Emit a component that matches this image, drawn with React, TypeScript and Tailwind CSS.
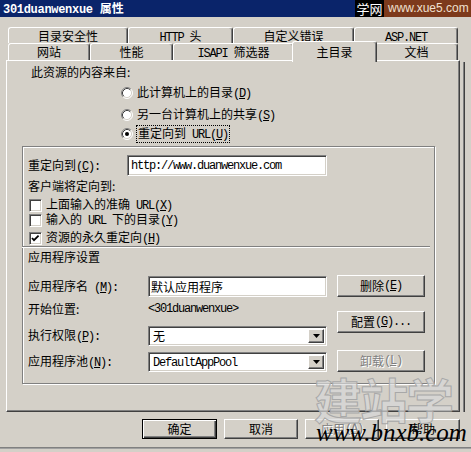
import React from 'react';

const M = ({ children }: { children: React.ReactNode }) => (
  <span className="font-['Liberation_Mono'] tracking-[-1.2px] whitespace-pre">{children}</span>
);

const U = ({ children }: { children: React.ReactNode }) => <span className="underline">{children}</span>;

const sunken =
  'bg-white border border-t-[#808080] border-l-[#808080] border-b-white border-r-white shadow-[inset_1px_1px_0_#404040,inset_-1px_-1px_0_#d4d0c8]';
const raised =
  'bg-[#d4d0c8] border border-t-white border-l-white border-b-[#404040] border-r-[#404040] shadow-[inset_-1px_-1px_0_#808080]';
const disabled = 'text-[#808080] [text-shadow:1px_1px_0_#ffffff]';

function Radio({ checked }: { checked?: boolean }) {
  return (
    <svg width="12" height="12" viewBox="0 0 12 12" className="shrink-0">
      <circle cx="6" cy="6" r="5" fill="white" />
      <path d="M2.11 9.89 A5.5 5.5 0 0 1 9.89 2.11" fill="none" stroke="#808080" />
      <path d="M9.89 2.11 A5.5 5.5 0 0 1 2.11 9.89" fill="none" stroke="#ffffff" />
      <path d="M2.82 9.18 A4.5 4.5 0 0 1 9.18 2.82" fill="none" stroke="#404040" />
      <path d="M9.18 2.82 A4.5 4.5 0 0 1 2.82 9.18" fill="none" stroke="#d4d0c8" />
      {checked && <circle cx="6" cy="6" r="2" fill="black" />}
    </svg>
  );
}

function Check({ checked }: { checked?: boolean }) {
  return (
    <div className={`w-[13px] h-[13px] shrink-0 ${sunken}`}>
      {checked && (
        <svg width="11" height="11" viewBox="0 0 11 11">
          <path d="M2 5 L4 7.2 L8.6 2.6" fill="none" stroke="black" strokeWidth="1.8" />
        </svg>
      )}
    </div>
  );
}

function Select({ value }: { value: React.ReactNode }) {
  return (
    <div className={`w-[179px] h-[20px] flex items-center p-[2px] ${sunken}`}>
      <span className="flex-1 pl-[2px] leading-[14px]">{value}</span>
      <div className={`w-[16px] h-full flex items-center justify-center ${raised}`}>
        <svg width="7" height="4" viewBox="0 0 7 4">
          <path d="M0 0 H7 L3.5 4 Z" fill="black" />
        </svg>
      </div>
    </div>
  );
}

function Tab({ w, children, selected }: { w: string; children: React.ReactNode; selected?: boolean }) {
  return (
    <div
      className={`${w} shrink-0 border-t border-l border-r border-t-white border-l-white border-r-[#404040] rounded-t-[3px] shadow-[inset_-1px_0_0_#808080] bg-[#d4d0c8] text-center leading-[14px] whitespace-nowrap ${
        selected ? 'relative z-10 -mt-[2px] h-[21px] -mx-[2px] pt-[3px]' : 'h-full pt-[1px]'
      }`}
    >
      {children}
    </div>
  );
}

export default function App() {
  return (
    <div className="w-[471px] h-[452px] bg-[#d4d0c8] relative overflow-hidden text-[12px] text-black font-['Noto_Sans_CJK_SC',sans-serif]">
      {/* Title bar */}
      <div className="h-[17px] bg-[#0a246a] flex items-center">
        <span className="flex-1 pl-[3px] text-white font-bold leading-[14px] whitespace-nowrap">
          <span className="font-['Liberation_Mono'] tracking-[-0.3px]">301duanwenxue </span>属性
        </span>
        <div className="w-[29px] h-full bg-black text-white text-[13px] text-center leading-[17px] whitespace-nowrap">学网</div>
        <div className="w-[87px] h-full bg-[#7d3a1c] text-[#f0e0d0] text-[12px] font-['Liberation_Sans'] pl-[4px] leading-[17px] whitespace-nowrap">
          www.xue5.com
        </div>
      </div>

      {/* Tabs */}
      <div className="mt-[10px] pl-[8px]">
        <div className="h-[16px] flex">
          <Tab w="w-[120px]">目录安全性</Tab>
          <Tab w="w-[105px]">
            <M>HTTP </M>头
          </Tab>
          <Tab w="w-[121px]">自定义错误</Tab>
          <Tab w="w-[104px]">
            <M>ASP.NET</M>
          </Tab>
        </div>
        <div className="h-[17px] flex">
          <Tab w="w-[82px]">网站</Tab>
          <Tab w="w-[83px]">性能</Tab>
          <Tab w="w-[121px]">
            <M>ISAPI </M>筛选器
          </Tab>
          <Tab w="w-[85px]" selected>
            主目录
          </Tab>
          <Tab w="w-[83px]">文档</Tab>
        </div>
      </div>

      {/* Panel */}
      <div className="flex">
        <div className="ml-[6px] w-[454px] h-[352px] border border-t-white border-l-white border-r-[#404040] border-b-[#404040] shadow-[inset_-1px_-1px_0_#808080] flex flex-col">
          <div className="mt-[4px] ml-[24px] leading-[14px]">此资源的内容来自:</div>
          <div className="mt-[6px] ml-[114px] flex items-center gap-[4px] leading-[14px]">
            <Radio />
            <span>
              此计算机上的目录<M>(<U>D</U>)</M>
            </span>
          </div>
          <div className="mt-[6px] ml-[114px] flex items-center gap-[4px] leading-[14px]">
            <Radio />
            <span>
              另一台计算机上的共享<M>(<U>S</U>)</M>
            </span>
          </div>
          <div className="mt-[3px] ml-[114px] flex items-center gap-[3px] h-[16px]">
            <Radio checked />
            <span className="border border-dotted border-black leading-[14px] px-[1px]">
              重定向到<M> URL(<U>U</U>)</M>
            </span>
          </div>

          {/* Group box */}
          <div className="mt-[4px] ml-[15px] w-[413px] h-[238px] border border-[#808080] shadow-[inset_1px_1px_0_#ffffff,1px_1px_0_#ffffff] flex flex-col">
            <div className="mt-[8px] pl-[5px] flex items-center h-[21px]">
              <span className="w-[99px] leading-[14px]">
                重定向到<M>(<U>C</U>):</M>
              </span>
              <div className={`w-[200px] h-[21px] flex items-center pl-[3px] ${sunken}`}>
                <M>http://www.duanwenxue.com</M>
              </div>
            </div>
            <div className="mt-[3px] pl-[5px] leading-[14px]">客户端将定向到:</div>
            <div className="mt-[5px] pl-[6px] flex items-center gap-[4px] h-[14px]">
              <Check />
              <span className="leading-[14px]">
                上面输入的准确<M> URL(<U>X</U>)</M>
              </span>
            </div>
            <div className="mt-[1px] pl-[6px] flex items-center gap-[4px] h-[14px]">
              <Check />
              <span className="leading-[14px]">
                输入的<M> URL </M>下的目录<M>(<U>Y</U>)</M>
              </span>
            </div>
            <div className="mt-[4px] pl-[6px] flex items-center gap-[4px] h-[14px]">
              <Check checked />
              <span className="leading-[14px]">
                资源的永久重定向<M>(<U>H</U>)</M>
              </span>
            </div>
            <div className="mt-[1px] -ml-[1px] w-[408px] h-[2px] border-t border-t-[#808080] border-b border-b-white" />
            <div className="mt-[2px] pl-[5px] leading-[14px]">应用程序设置</div>

            <div className="flex">
              <div className="pl-[5px] flex flex-col">
                <div className="mt-[12px] flex items-center h-[21px]">
                  <span className="w-[120px] leading-[14px]">
                    应用程序名<M> (<U>M</U>):</M>
                  </span>
                  <div className={`w-[179px] h-[21px] flex items-center pl-[2px] ${sunken}`}>默认应用程序</div>
                </div>
                <div className="mt-[5px] flex items-center h-[14px]">
                  <span className="w-[120px] leading-[14px]">开始位置:</span>
                  <M>&lt;301duanwenxue&gt;</M>
                </div>
                <div className="mt-[10px] flex items-center h-[20px]">
                  <span className="w-[120px] leading-[14px]">
                    执行权限<M>(<U>P</U>):</M>
                  </span>
                  <Select value="无" />
                </div>
                <div className="mt-[6px] flex items-center h-[20px]">
                  <span className="w-[120px] leading-[14px]">
                    应用程序池<M>(<U>N</U>):</M>
                  </span>
                  <Select value={<M>DefaultAppPool</M>} />
                </div>
              </div>
              <div className="ml-[10px] w-[88px] flex flex-col">
                <div className={`mt-[11px] h-[22px] flex items-center justify-center leading-[14px] ${raised}`}>
                  删除<M>(<U>E</U>)</M>
                </div>
                <div className={`mt-[14px] h-[22px] flex items-center justify-center leading-[14px] ${raised}`}>
                  配置<M>(<U>G</U>)...</M>
                </div>
                <div className={`mt-[17px] h-[22px] flex items-center justify-center leading-[14px] ${raised} ${disabled}`}>
                  卸载<M>(<U>L</U>)</M>
                </div>
              </div>
            </div>
          </div>
        </div>
        <div className="ml-[3px] mt-[2px] w-[2px] h-[350px] border-l border-l-[#808080] border-r border-r-[#404040]" />
      </div>

      {/* Bottom buttons */}
      <div className="mt-[7px] pl-[142px] flex gap-[7px]">
        <div className="w-[75px] h-[20px] border border-black shadow-[inset_1px_1px_0_#ffffff,inset_-1px_-1px_0_#404040,inset_-2px_-2px_0_#808080] flex items-center justify-center leading-[14px]">
          确定
        </div>
        <div className={`w-[74px] h-[20px] flex items-center justify-center leading-[14px] ${raised}`}>取消</div>
        <div className={`w-[74px] h-[20px] flex items-center justify-center leading-[14px] ${raised} ${disabled}`}>
          应用<M>(<U>A</U>)</M>
        </div>
        <div className={`w-[74px] h-[20px] flex items-center justify-center leading-[14px] ${raised}`}>帮助</div>
      </div>
      <div className="mt-[8px] h-[2px] border-t border-t-[#808080] border-b border-b-[#a0a0a0]" />

      {/* Watermarks */}
      <div className="absolute left-[314px] top-[370px] text-[48px] font-bold leading-[56px] text-[#d8d8d8]/70 [-webkit-text-stroke:1px_#a8a8a8] tracking-[-2px] pointer-events-none">
        建站学
      </div>
      <div className="absolute left-[316px] top-[418px] text-[25px] italic font-['Liberation_Serif'] leading-[30px] text-black pointer-events-none">
        www.bnxb.com
      </div>
    </div>
  );
}
